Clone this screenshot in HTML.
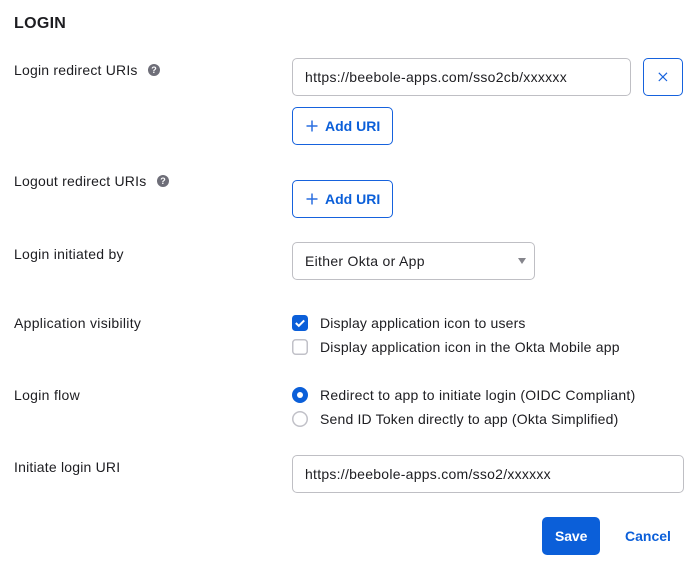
<!DOCTYPE html>
<html><head><meta charset="utf-8"><style>
html,body{margin:0;padding:0;background:#fff;width:699px;height:571px;overflow:hidden}
body{position:relative;font-family:"Liberation Sans",sans-serif;font-size:14px;color:#1d1d21}
.t{position:absolute;white-space:nowrap;line-height:20px;height:20px}
.b{position:absolute;box-sizing:border-box;border:1px solid #bfbfc4;border-radius:5px;background:#fff}
.p{border-color:#1662dd}
.a{color:#0b5fd9;font-weight:700}
svg{position:absolute;display:block}
</style></head><body>
<div class="t" style="left:14px;top:13px;height:20px;font-size:16px;font-weight:700;letter-spacing:.3px;line-height:22px">LOGIN</div>

<div class="t" style="left:14px;top:60px;letter-spacing:.2px">Login redirect URIs</div>
<svg style="left:148px;top:64px" width="12" height="12" viewBox="0 0 12 12"><circle cx="6" cy="6" r="6" fill="#6e6e78"/><text x="6" y="9" font-size="9" font-weight="700" fill="#fff" text-anchor="middle" font-family="Liberation Sans">?</text></svg>
<div class="t" style="left:14px;top:171px;letter-spacing:.2px">Logout redirect URIs</div>
<svg style="left:157px;top:175px" width="12" height="12" viewBox="0 0 12 12"><circle cx="6" cy="6" r="6" fill="#6e6e78"/><text x="6" y="9" font-size="9" font-weight="700" fill="#fff" text-anchor="middle" font-family="Liberation Sans">?</text></svg>
<div class="t" style="left:14px;top:244px;letter-spacing:.26px">Login initiated by</div>
<div class="t" style="left:14px;top:313px;letter-spacing:.3px">Application visibility</div>
<div class="t" style="left:14px;top:385px;letter-spacing:.3px">Login flow</div>
<div class="t" style="left:14px;top:457px;letter-spacing:.2px">Initiate login URI</div>

<div class="b" style="left:292px;top:58px;width:339px;height:38px"></div>
<div class="t" style="left:305px;top:67px;letter-spacing:.28px">https://beebole-apps.com/sso2cb/xxxxxx</div>
<div class="b p" style="left:643px;top:58px;width:40px;height:38px"></div>
<svg style="left:658px;top:72px" width="10" height="10" viewBox="0 0 10 10"><path d="M.8 .8L9 9M9 .8L.8 9" stroke="#1662dd" stroke-width="1.2" fill="none"/></svg>

<div class="b p" style="left:292px;top:107px;width:101px;height:38px"></div>
<svg style="left:306px;top:120px" width="12" height="12" viewBox="0 0 12 12"><path d="M6 .5V11.5M.5 6H11.5" stroke="#2a6fe0" stroke-width="1.5" fill="none"/></svg>
<div class="t a" style="left:325px;top:116px">Add URI</div>

<div class="b p" style="left:292px;top:180px;width:101px;height:38px"></div>
<svg style="left:306px;top:193px" width="12" height="12" viewBox="0 0 12 12"><path d="M6 .5V11.5M.5 6H11.5" stroke="#2a6fe0" stroke-width="1.5" fill="none"/></svg>
<div class="t a" style="left:325px;top:189px">Add URI</div>

<div class="b" style="left:292px;top:242px;width:243px;height:38px"></div>
<div class="t" style="left:305px;top:251px;letter-spacing:.3px">Either Okta or App</div>
<svg style="left:518px;top:258px" width="8" height="6" viewBox="0 0 8 6"><path d="M0 0H8L4 6Z" fill="#85858c"/></svg>

<svg style="left:292px;top:315px" width="16" height="16" viewBox="0 0 16 16"><rect width="16" height="16" rx="3.5" fill="#0b5fd9"/><path d="M3.8 8L6.8 10.8L12.2 5.4" stroke="#fff" stroke-width="2" fill="none"/></svg>
<div class="t" style="left:320px;top:313px;letter-spacing:.17px">Display application icon to users</div>
<svg style="left:292px;top:339px" width="16" height="16" viewBox="0 0 16 16"><rect x=".75" y=".75" width="14.5" height="14.5" rx="3" fill="#fff" stroke="#c1c1c8" stroke-width="1.5"/></svg>
<div class="t" style="left:320px;top:337px;letter-spacing:.2px">Display application icon in the Okta Mobile app</div>

<svg style="left:292px;top:387px" width="16" height="16" viewBox="0 0 16 16"><circle cx="8" cy="8" r="8" fill="#0b5fd9"/><circle cx="8" cy="8" r="3" fill="#fff"/></svg>
<div class="t" style="left:320px;top:385px;letter-spacing:.24px">Redirect to app to initiate login (OIDC Compliant)</div>
<svg style="left:292px;top:411px" width="16" height="16" viewBox="0 0 16 16"><circle cx="8" cy="8" r="7.25" fill="#fff" stroke="#c1c1c8" stroke-width="1.5"/></svg>
<div class="t" style="left:320px;top:409px;letter-spacing:.18px">Send ID Token directly to app (Okta Simplified)</div>

<div class="b" style="left:292px;top:455px;width:392px;height:38px"></div>
<div class="t" style="left:305px;top:464px;letter-spacing:.26px">https://beebole-apps.com/sso2/xxxxxx</div>

<div class="b" style="left:542px;top:517px;width:58px;height:38px;background:#0b5fd9;border-color:#0b5fd9"></div>
<div class="t" style="left:555px;top:526px;color:#fff;font-weight:700;letter-spacing:-.1px">Save</div>
<div class="t a" style="left:625px;top:526px">Cancel</div>
</body></html>
